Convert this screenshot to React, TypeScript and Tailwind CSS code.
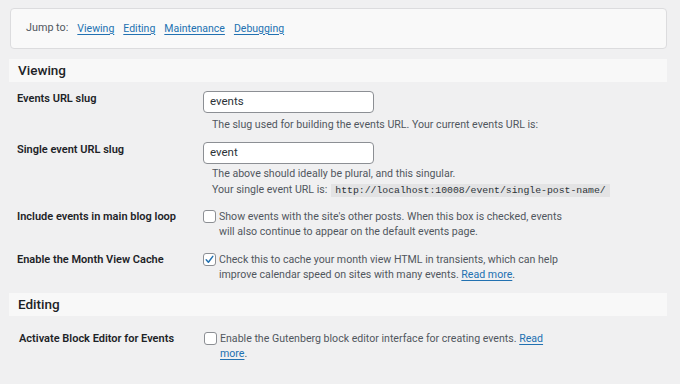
import React from "react";

const font = "font-['Roboto','Noto_Sans',sans-serif]";

function Checkbox({ checked = false }: { checked?: boolean }) {
  return (
    <span className="mt-[1px] flex h-[13px] w-[13px] shrink-0 items-center justify-center rounded-[3px] border border-[#8c8f94] bg-white">
      {checked && (
        <svg width="11" height="11" viewBox="0 0 11 11" fill="none">
          <path d="M2.2 5.8 L4.4 8.2 L8.8 2.4" stroke="#2271b1" strokeWidth="1.5" strokeLinecap="round" strokeLinejoin="round" />
        </svg>
      )}
    </span>
  );
}

function SectionHeader({ title }: { title: string }) {
  return (
    <div className="flex h-[23px] items-center bg-[#f8f8f8] pl-[9px] text-[13.5px] font-medium text-[#1d2327]">
      {title}
    </div>
  );
}

function Row({ label, children, className = "" }: { label: string; children: React.ReactNode; className?: string }) {
  return (
    <div className={`grid grid-cols-[186px_1fr] pl-[8px] ${className}`}>
      <div className="text-[11px] font-semibold leading-[15px] text-[#1d2327]">{label}</div>
      <div>{children}</div>
    </div>
  );
}

function TextInput({ value }: { value: string }) {
  return (
    <div className="flex h-[22px] w-[171px] items-center rounded-[4px] border border-[#8c8f94] bg-white pl-[6px] text-[11.5px] text-[#2c3338]">
      {value}
    </div>
  );
}

export default function App() {
  return (
    <div className={`min-h-screen bg-[#f0f0f1] pl-[9px] pr-[13px] pt-[8px] ${font}`}>
      {/* jump nav */}
      <div className="ml-[1px] flex h-[41px] items-center gap-[9px] rounded-[4px] border border-[#dcdcde] bg-[#f9f9f9] pl-[15px] text-[10.5px] text-[#50575e]">
        <span className="text-[10.8px]">Jump to:</span>
        {["Viewing", "Editing", "Maintenance", "Debugging"].map((l) => (
          <a key={l} href="#" className="text-[#2271b1] underline underline-offset-2">
            {l}
          </a>
        ))}
      </div>

      <div className="mt-[10px]">
        <SectionHeader title="Viewing" />
      </div>

      <Row label="Events URL slug" className="mt-[9px]">
        <TextInput value="events" />
        <p className="mt-[4px] pl-[9px] text-[10.6px] leading-[16px] text-[#50575e]">
          The slug used for building the events URL. Your current events URL is:
        </p>
      </Row>

      <Row label="Single event URL slug" className="mt-[9px]">
        <TextInput value="event" />
        <p className="mt-[2px] pl-[9px] text-[10.6px] leading-[16px] text-[#50575e]">
          The above should ideally be plural, and this singular.
          <br />
          Your single event URL is:
          <code className="ml-[4px] bg-[#e3e3e4] px-[4px] py-[1px] font-['Liberation_Mono',monospace] text-[9.8px] text-[#2c3338]">
            http://localhost:10008/event/single-post-name/
          </code>
        </p>
      </Row>

      <Row label="Include events in main blog loop" className="mt-[10px]">
        <label className="flex gap-[3px] text-[10.6px] leading-[15px] text-[#50575e]">
          <Checkbox />
          <span className="w-[346px]">
            Show events with the site's other posts. When this box is checked, events will also continue to appear on the default events page.
          </span>
        </label>
      </Row>

      <Row label="Enable the Month View Cache" className="mt-[13px]">
        <label className="flex gap-[3px] text-[10.6px] leading-[15px] text-[#50575e]">
          <Checkbox checked />
          <span className="w-[346px]">
            Check this to cache your month view HTML in transients, which can help improve calendar speed on sites with many events.{" "}
            <a href="#" className="text-[#2271b1] underline underline-offset-2">Read more</a>.
          </span>
        </label>
      </Row>

      <div className="mt-[11px]">
        <SectionHeader title="Editing" />
      </div>

      <div className="mt-[15px] grid grid-cols-[185px_1fr] pl-[10px]">
        <div className="text-[11px] font-semibold leading-[15px] text-[#1d2327]">Activate Block Editor for Events</div>
        <label className="flex gap-[3px] text-[10.6px] leading-[15px] text-[#50575e]">
          <Checkbox />
          <span className="w-[332px]">
            Enable the Gutenberg block editor interface for creating events.{" "}
            <a href="#" className="text-[#2271b1] underline underline-offset-2">Read more</a>.
          </span>
        </label>
      </div>
    </div>
  );
}
